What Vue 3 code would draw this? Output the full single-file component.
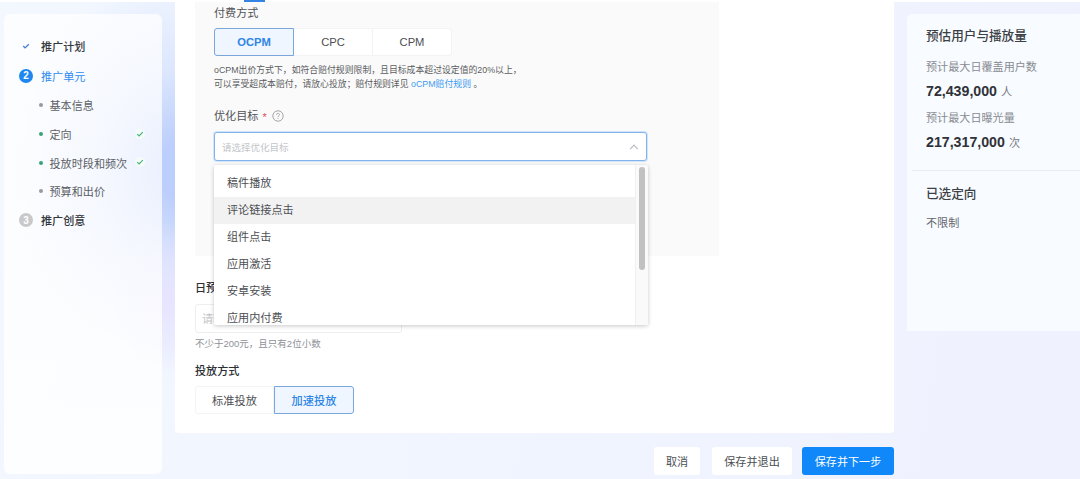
<script setup>
import { ref } from 'vue'

const steps = [
  {
    title: '推广计划',
    status: 'done'
  },
  {
    title: '推广单元',
    status: 'active',
    index: 2,
    children: [
      { title: '基本信息' },
      { title: '定向', done: true },
      { title: '投放时段和频次', done: true },
      { title: '预算和出价' }
    ]
  },
  {
    title: '推广创意',
    status: 'wait',
    index: 3
  }
]

const payTypes = ['OCPM', 'CPC', 'CPM']
const payType = ref('OCPM')

const targets = ['稿件播放', '评论链接点击', '组件点击', '应用激活', '安卓安装', '应用内付费']
const hovered = ref(1)
const open = ref(true)

const speeds = ['标准投放', '加速投放']
const speed = ref('加速投放')
</script>

<template>
  <div class="page">
    <header class="topbar"><span class="topbar-tab"></span></header>

    <div class="layout">
      <aside class="steps">
        <template v-for="step in steps" :key="step.title">
          <div class="step" :class="step.status">
            <span class="step-icon">
              <svg v-if="step.status === 'done'" width="8" height="8" viewBox="0 0 8 8">
                <path d="M1.2 4.1 3.1 5.9 6.8 2.3" fill="none" stroke="#4a7fd0" stroke-width="1.4" />
              </svg>
              <template v-else>{{ step.index }}</template>
            </span>
            <span>{{ step.title }}</span>
          </div>
          <div v-for="child in step.children" :key="child.title" class="sub" :class="{ done: child.done }">
            <i class="dot"></i>
            <span>{{ child.title }}</span>
            <span v-if="child.done" class="sub-check">
              <svg width="8" height="8" viewBox="0 0 8 8">
                <path d="M1.2 4.2 3.1 6 6.8 2.2" fill="none" stroke="#49b07c" stroke-width="1.1" />
              </svg>
            </span>
          </div>
        </template>
      </aside>

      <div class="center">
        <main class="card">
          <section class="panel">
            <div class="label">付费方式</div>
            <div class="radios">
              <button
                v-for="type in payTypes"
                :key="type"
                type="button"
                class="radio"
                :class="{ checked: type === payType }"
                @click="payType = type"
              >{{ type }}</button>
            </div>
            <p class="note">
              oCPM出价方式下，如符合赔付规则限制，且目标成本超过设定值的20%以上，<br>
              可以享受超成本赔付，请放心投放；赔付规则详见 <a>oCPM赔付规则</a> 。
            </p>
            <div class="label target-label">
              优化目标 <span class="required">*</span>
              <svg width="12" height="12" viewBox="0 0 12 12" fill="none" stroke="#8f8f8f" stroke-width="0.8">
                <circle cx="6" cy="6" r="5.2" />
                <path d="M4.5 4.9C4.5 3.9 5.1 3.4 6 3.4s1.5.5 1.5 1.3C7.5 5.700 6 5.800 6 7" />
                <path d="M6 8v.9" />
              </svg>
            </div>
            <div class="select">
              <div class="select-input" @click="open = !open">
                <span>请选择优化目标</span>
                <svg width="10" height="10" viewBox="0 0 10 10">
                  <path d="M1.200 7.100 5 3.200l3.800 3.900" fill="none" stroke="#b9bcc2" stroke-width="1.2" />
                </svg>
              </div>
              <div v-show="open" class="dropdown">
                <ul class="options">
                  <li
                    v-for="(target, i) in targets"
                    :key="target"
                    :class="{ hover: i === hovered }"
                    @mouseenter="hovered = i"
                  >{{ target }}</li>
                </ul>
                <div class="track"><div class="thumb"></div></div>
              </div>
            </div>
          </section>

          <div class="title budget-title">日预算</div>
          <div class="budget-input">请输入</div>
          <div class="hint">不少于200元，且只有2位小数</div>

          <div class="title">投放方式</div>
          <div class="radios speed">
            <button
              v-for="item in speeds"
              :key="item"
              type="button"
              class="radio"
              :class="{ checked: item === speed }"
              @click="speed = item"
            >{{ item }}</button>
          </div>
        </main>

        <footer class="actions">
          <button type="button" class="btn">取消</button>
          <button type="button" class="btn save">保存并退出</button>
          <button type="button" class="btn primary">保存并下一步</button>
        </footer>
      </div>

      <aside class="estimate">
        <h3>预估用户与播放量</h3>
        <div class="metric">预计最大日覆盖用户数</div>
        <div class="value"><b>72,439,000</b> 人</div>
        <div class="metric">预计最大日曝光量</div>
        <div class="value"><b>217,317,000</b> 次</div>
        <div class="divider"></div>
        <h3>已选定向</h3>
        <div class="metric limit">不限制</div>
      </aside>
    </div>
  </div>
</template>

<style>
body {
  margin: 0;
}
</style>

<style scoped>
*,
::before,
::after {
  box-sizing: border-box;
}

.page {
  width: 1080px;
  height: 479px;
  overflow: hidden;
  font-family: "Liberation Sans", "Noto Sans CJK SC", sans-serif;
  font-size: 11.1px;
  color: #3d3f43;
  background:
    radial-gradient(ellipse 60px 80px at 172px 300px, rgba(232, 226, 255, 0.8), transparent),
    radial-gradient(ellipse 170px 200px at 185px 170px, #bccefb 15%, rgba(205, 219, 252, 0.6) 50%, transparent),
    linear-gradient(100deg, #f3f8ff, #f0f4ff 60%, #eff2fe);
}

.topbar {
  height: 2px;
  padding-left: 244px;
  background: #fff;
}

.topbar-tab {
  display: block;
  width: 21px;
  height: 2px;
  background: #3484e6;
}

.layout {
  display: flex;
  align-items: flex-start;
  height: 477px;
}

.steps {
  width: 158px;
  height: 460px;
  margin: 12px 13px 0 4px;
  padding: 17px 0 0 16px;
  border-radius: 6px;
  background: linear-gradient(rgba(255, 255, 255, 0.72) 50%, rgba(255, 255, 255, 0.85));
}

.step {
  display: flex;
  align-items: center;
  height: 29px;
  font-weight: 500;
  color: #33363b;
}

.step.active {
  height: 31px;
  color: #2d8cf0;
  font-weight: 400;
}

.step-icon {
  display: flex;
  align-items: center;
  justify-content: center;
  width: 14px;
  height: 14px;
  margin: 0 8px 0 -1px;
  border-radius: 50%;
  font-size: 10px;
  font-weight: 700;
  color: #fff;
}

.active .step-icon {
  background: #1e88f0;
}

.wait .step-icon {
  background: #c9c9cb;
}

.sub {
  display: flex;
  align-items: center;
  position: relative;
  height: 28.700px;
  padding-left: 19px;
  color: #5c5f65;
}

.dot {
  width: 4px;
  height: 4px;
  margin-right: 6.500px;
  border-radius: 50%;
  background: #96999f;
}

.done .dot {
  background: #3ba176;
}

.sub-check {
  position: absolute;
  left: 115px;
  top: 9px;
  display: flex;
  align-items: center;
  justify-content: center;
  width: 10px;
  height: 10px;
  border-radius: 50%;
  background: #f3fcf8;
}

.center {
  width: 719px;
}

.card {
  height: 431px;
  padding: 0 20px;
  border-radius: 0 0 4px 4px;
  background: #fff;
}

.panel {
  width: 524px;
  height: 254px;
  padding: 0 0 0 19px;
  background: #fafafa;
}

.label {
  height: 26px;
  line-height: 22px;
  color: #505256;
}

.radios {
  display: flex;
}

.radio {
  width: 79px;
  height: 28px;
  padding: 0;
  border: 1px solid #f2f3f5;
  border-left: 0;
  background: #fff;
  font-family: inherit;
  font-size: 11.200px;
  color: #4c4e52;
}

.radio:first-child {
  border-left: 1px solid #f2f3f5;
  border-radius: 3px 0 0 3px;
}

.radio:last-child {
  border-radius: 0 3px 3px 0;
}

.radio.checked {
  width: 80px;
  border: 1px solid #78a6dd;
  background: #f0f6ff;
  color: #2d85e5;
  font-weight: 700;
}

.note {
  height: 46px;
  margin: 0;
  padding-top: 7px;
  font-size: 8.850px;
  line-height: 14px;
  white-space: nowrap;
  color: #5b5d61;
}

.note a {
  color: #3c9af0;
}

.target-label {
  display: flex;
  align-items: center;
  height: 27px;
}

.required {
  margin: 2px 5px 0 4px;
  color: #e2555d;
}

.select {
  position: relative;
  width: 433px;
  margin-top: 3px;
}

.select-input {
  display: flex;
  align-items: center;
  justify-content: space-between;
  height: 29px;
  padding: 0 7px;
  border: 1px solid #82b4eb;
  border-radius: 3px;
  box-shadow: 0 0 0 1px rgba(45, 140, 240, 0.2);
  background: #fff;
  font-size: 9.500px;
  color: #c3c5c9;
}

.dropdown {
  position: absolute;
  z-index: 2;
  top: 33px;
  left: 0;
  display: flex;
  width: 434px;
  height: 160px;
  overflow: hidden;
  border-radius: 2px;
  background: #fff;
  box-shadow: 0 1px 4px rgba(0, 0, 0, 0.22);
}

.options {
  flex: 1;
  margin: 0;
  padding: 5px 0 0;
  list-style: none;
}

.options li {
  height: 27px;
  padding-left: 13px;
  line-height: 27px;
  color: #4c4e52;
}

.options li.hover {
  background: #f2f2f2;
}

.track {
  width: 13px;
  padding: 2px 3px;
  border-left: 1px solid #f0f0f0;
  background: #fafafa;
}

.thumb {
  width: 6px;
  height: 103px;
  border-radius: 3px;
  background: #c1c1c1;
}

.title {
  height: 31px;
  line-height: 32px;
  font-weight: 500;
  color: #2c2e33;
}

.budget-title {
  margin-top: 16px;
  height: 32px;
}

.budget-input {
  width: 207px;
  height: 29px;
  overflow: hidden;
  padding-left: 6px;
  border: 1px solid #eceef1;
  border-radius: 3px;
  line-height: 28px;
  font-size: 11px;
  color: #c3c5c9;
}

.hint {
  height: 22px;
  line-height: 22px;
  font-size: 9.500px;
  color: #8e9196;
}

.speed .checked {
  font-weight: 500;
}

.actions {
  display: flex;
  justify-content: flex-end;
  padding-top: 14px;
}

.btn {
  width: 46px;
  height: 28px;
  padding: 0;
  border: 0;
  border-radius: 3px;
  background: #fff;
  font-family: inherit;
  font-size: 11.100px;
  color: #4c4e52;
}

.btn.save {
  width: 80px;
  margin: 0 10px 0 12px;
}

.btn.primary {
  width: 92px;
  background: #1088fa;
  color: #fff;
}

.estimate {
  width: 173px;
  height: 317px;
  margin: 12px 0 0 13px;
  padding: 13px 0 0 5px;
  border-radius: 5px 0 0 0;
  background: #f8fbff;
}

.estimate h3 {
  height: 18px;
  margin: 0 0 11px 14px;
  line-height: 18px;
  font-size: 12.600px;
  font-weight: 500;
  color: #3c3f45;
}

.metric {
  height: 22px;
  margin-left: 14px;
  line-height: 22px;
  color: #888b91;
}

.value {
  height: 29px;
  margin-left: 14px;
  line-height: 26px;
  color: #777a80;
}

.value b {
  margin-right: 1px;
  font-size: 14.200px;
  color: #2f3238;
}

.divider {
  height: 1px;
  margin: 12px 0 14px;
  background: #e9edf3;
}

.metric.limit {
  margin-top: -2px;
  color: #65686e;
}
</style>
